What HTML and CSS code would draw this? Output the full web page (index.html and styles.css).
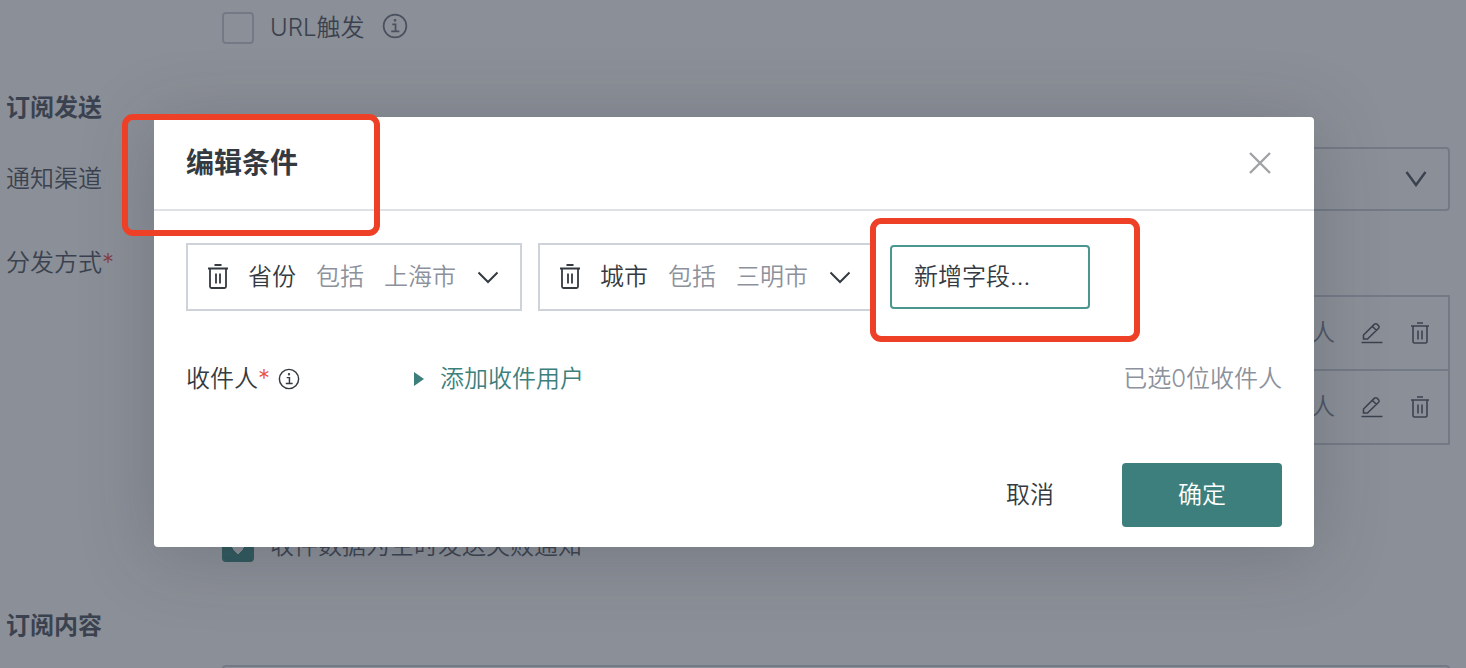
FILE: index.html
```html
<!DOCTYPE html>
<html lang="zh-CN">
<head>
<meta charset="utf-8">
<meta name="viewport" content="width=device-width, initial-scale=1">
<title>编辑条件</title>
<link rel="stylesheet" href="styles.css">
</head>
<body>
<svg class="sprite" aria-hidden="true">
  <symbol id="trash" viewBox="0 0 22 26">
    <path d="M8.500 1H15.500M2 4.500H22M4 4.500V22.500Q4 24 5.500 24H18.500Q20 24 20 22.500V4.500M10 9.500V19.500M14 9.500V19.500"/>
  </symbol>
  <symbol id="bin" viewBox="0 0 22 24">
    <path d="M8 2H14M2 5H20M4 5V20.500Q4 22 5.500 22H16.500Q18 22 18 20.500V5M9 9.500V18.500M13 9.500V18.500"/>
  </symbol>
  <symbol id="edit" viewBox="0 0 22 24">
    <path d="M.5 21.500H21.500M2.500 18V14L13.500 3.200Q14.700 2.200 16 3.200L17.600 4.800Q18.600 6 17.600 7.200L6.500 18ZM11.500 5.500L15.500 9.500"/>
  </symbol>
  <symbol id="info" viewBox="0 0 24 24">
    <circle cx="12" cy="12" r="10.500"/>
    <path d="M9.500 10.500H12.500V17M8.500 17H16"/>
    <circle cx="12" cy="6.800" r=".5"/>
  </symbol>
  <symbol id="down" viewBox="0 0 24 24">
    <path d="M2.500 7.500L12 17L21.500 7.500"/>
  </symbol>
</svg>

<main class="page">
  <div class="row first">
    <label class="check control"><input type="checkbox"><span>URL触发</span><svg class="icon info"><use href="#info"/></svg></label>
  </div>
  <h2>订阅发送</h2>
  <div class="row channel">
    <span class="label">通知渠道</span>
    <button class="select control" type="button" aria-label="通知渠道"><svg class="caret" viewBox="0 0 22 16"><path d="M1.500 1L11 14L20.500 1"/></svg></button>
  </div>
  <div class="row mode"><span class="label">分发方式<i>*</i></span></div>
  <div class="row list">
    <table class="control">
      <tr><td><div class="cells"><span>人</span><button type="button" aria-label="编辑"><svg class="icon"><use href="#edit"/></svg></button><button type="button" aria-label="删除"><svg class="icon"><use href="#bin"/></svg></button></div></td></tr>
      <tr><td><div class="cells"><span>人</span><button type="button" aria-label="编辑"><svg class="icon"><use href="#edit"/></svg></button><button type="button" aria-label="删除"><svg class="icon"><use href="#bin"/></svg></button></div></td></tr>
    </table>
  </div>
  <div class="row notice">
    <label class="check control"><input type="checkbox" checked><span>收件数据为空时发送失败通知</span></label>
  </div>
  <h2 class="content-title">订阅内容</h2>
  <div class="row content"><input class="field control" type="text" aria-label="订阅内容"></div>
</main>

<div class="mask">
  <section class="modal" role="dialog" aria-modal="true" aria-labelledby="title">
    <header>
      <h1 id="title">编辑条件</h1>
      <button type="button" class="close" aria-label="关闭"><svg viewBox="0 0 24 24"><path d="M2 2L22 22M22 2L2 22"/></svg></button>
    </header>
    <div class="conditions">
      <div class="chip">
        <button type="button" aria-label="删除"><svg class="icon trash"><use href="#trash"/></svg></button>
        <button type="button" class="rule"><span class="name">省份</span><span>包括</span><span>上海市</span><svg class="icon down"><use href="#down"/></svg></button>
      </div>
      <div class="chip">
        <button type="button" aria-label="删除"><svg class="icon trash"><use href="#trash"/></svg></button>
        <button type="button" class="rule"><span class="name">城市</span><span>包括</span><span>三明市</span><svg class="icon down"><use href="#down"/></svg></button>
      </div>
      <button type="button" class="add">新增字段...</button>
    </div>
    <div class="recipients">
      <span class="who">收件人<i>*</i><svg class="icon info"><use href="#info"/></svg></span>
      <button type="button" class="expand"><svg viewBox="0 0 10 14"><path d="M0 0L10 7L0 14Z"/></svg>添加收件用户</button>
      <span class="count">已选0位收件人</span>
    </div>
    <footer>
      <button type="button" class="cancel">取消</button>
      <button type="button" class="ok">确定</button>
    </footer>
  </section>
</div>
<div class="mark mark-title"></div>
<div class="mark mark-add"></div>
</body>
</html>
```

FILE: styles.css
```css
* { box-sizing: border-box; }

body {
  margin: 0;
  height: 100vh;
  overflow: hidden;
  position: relative;
  font: 350 24px/36px Inter, "Noto Sans CJK SC", sans-serif;
  color: #343a40;
  background: #fff;
}

button {
  padding: 0;
  border: 0;
  background: none;
  font: inherit;
  color: inherit;
  display: flex;
  align-items: center;
}

h1, h2 { margin: 0; }
h1 { font-size: 28px; font-weight: 600; }
h2 { font-size: 24px; font-weight: 600; }
i { font-style: normal; color: #e8503f; }
svg { display: block; flex: none; fill: none; stroke: currentColor; stroke-width: 2; }

.sprite { position: absolute; width: 0; height: 0; }
.icon { width: 22px; height: 24px; stroke-width: 1.6; }
.trash { height: 26px; stroke-width: 1.8; overflow: visible; }
.down { width: 24px; stroke-width: 2; }

/* form below the dialog */
.page { height: 100%; overflow: hidden; padding: 0 16px 0 6px; color: #5f656f; }
.page i { color: #f05a5a; }
.row { display: grid; grid-template-columns: 216px 1fr; align-items: center; }
.control { grid-column: 2; }
.first { height: 56px; }
.first + h2 { margin-top: 34px; }
.channel { margin-top: 21px; }
.mode { margin-top: 34px; }
.list { margin-top: 14px; }
.notice { margin-top: 83px; }
.content-title { margin-top: 44px; }
.content { margin-top: 21px; }

.check { display: flex; align-items: center; gap: 16px; }
.check input {
  appearance: none;
  width: 32px;
  height: 32px;
  margin: 0;
  border: 2px solid #d0d2dc;
  border-radius: 4px;
}
.check input:checked {
  border-color: #46908b;
  background: #46908b conic-gradient(from -40deg at 50% 100%, #fff 80deg, transparent 0) center / 18px 18px no-repeat;
}
.check .info { width: 26px; height: 26px; margin: 0 2px 4px; color: #7d828d; }

.select, .field { width: 100%; height: 64px; border: 2px solid #d0d2dc; border-radius: 4px; }
.select { justify-content: flex-end; padding-right: 21px; }
.caret { width: 22px; height: 16px; stroke-width: 2.5; }

table { width: 100%; border-collapse: collapse; }
td { padding: 0; height: 74px; border: 2px solid #d0d2dc; }
.cells { display: flex; align-items: center; justify-content: flex-end; gap: 26px; padding-right: 17px; }
.cells span { color: #858a99; }

/* dialog */
.mask {
  position: absolute;
  inset: 0;
  padding: 117px 152px 0 154px;
  background: rgba(24, 32, 48, .5);
}
.modal {
  background: #fff;
  border-radius: 4px;
  padding-bottom: 20px;
  box-shadow: 0 8px 72px rgba(48, 56, 64, .25);
}
.modal header {
  display: flex;
  align-items: center;
  justify-content: space-between;
  height: 94px;
  padding: 0 42px 0 32px;
  border-bottom: 2px solid #dee2e6;
}
.close { color: #a0a2a5; }
.close svg { width: 24px; height: 24px; stroke-width: 2.4; }

.conditions { display: flex; align-items: center; gap: 16px; padding: 32px 32px 0; }
.chip {
  display: flex;
  align-items: center;
  gap: 20px;
  width: 336px;
  height: 68px;
  padding: 0 18px;
  border: 2px solid #ced2d9;
}
.rule { gap: 20px; color: #8c919c; }
.rule .name, .rule .down { color: #343a40; }
.add { width: 200px; height: 64px; padding: 0 22px; border: 2px solid #4c9690; border-radius: 4px; }

.recipients { display: flex; align-items: center; margin-top: 50px; padding: 0 32px; }
.who { display: flex; align-items: center; width: 228px; }
.who .info { margin-left: 8px; }
.expand { gap: 16px; color: #3d7f7c; }
.expand svg { width: 10px; height: 14px; fill: currentColor; stroke: none; }
.count { margin-left: auto; color: #8c919c; }

.modal footer { display: flex; justify-content: flex-end; gap: 16px; margin-top: 66px; padding: 0 32px; }
.modal footer button { justify-content: center; height: 64px; border-radius: 4px; }
.cancel { width: 152px; }
.modal footer .ok { width: 160px; background: #3d7f7c; color: #fff; }

/* highlight frames laid over the screen */
.mark { position: absolute; border: 6px solid #ee4026; border-radius: 11px; pointer-events: none; }
.mark-title { left: 122px; top: 114px; width: 258px; height: 122px; }
.mark-add { left: 870px; top: 218px; width: 270px; height: 124px; }
```
